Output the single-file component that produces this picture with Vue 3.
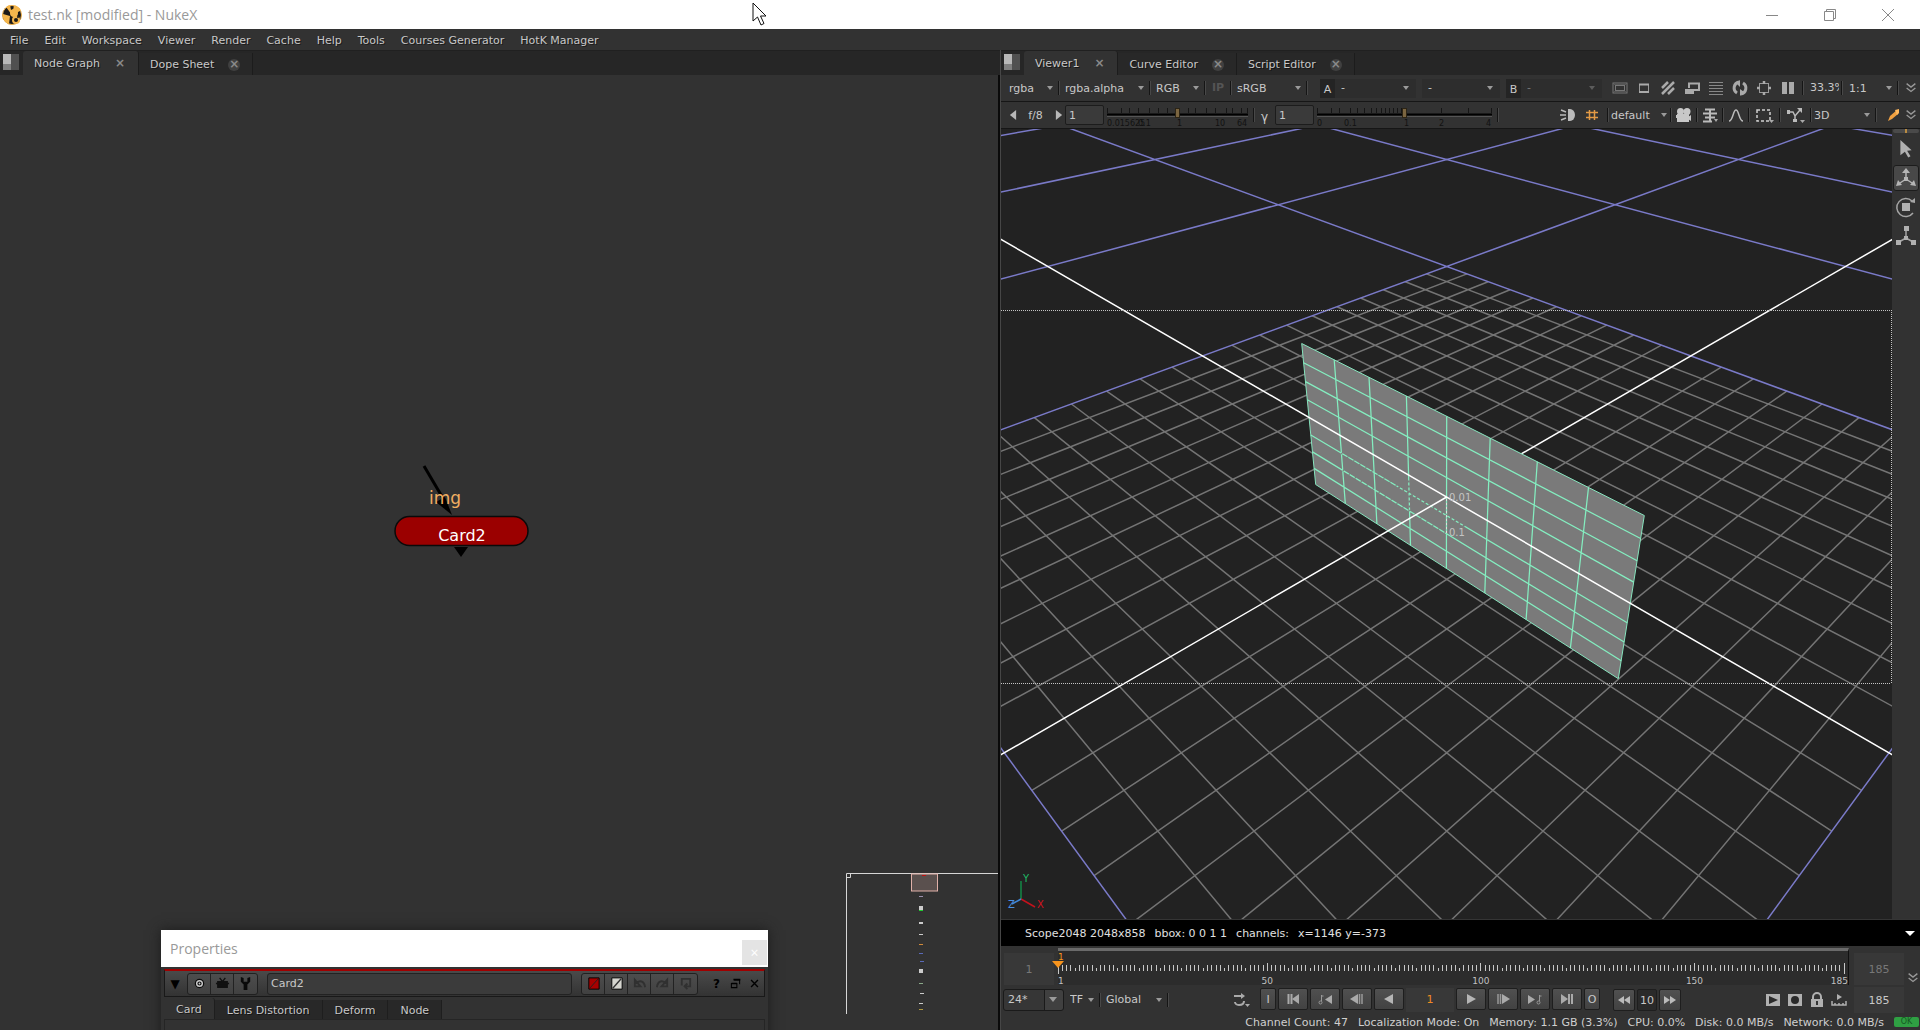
<script setup>
import { ref } from 'vue'

const menus = ['File', 'Edit', 'Workspace', 'Viewer', 'Render', 'Cache', 'Help', 'Tools', 'Courses Generator', 'HotK Manager']
const leftTabs = ['Node Graph', 'Dope Sheet']
const rightTabs = ['Viewer1', 'Curve Editor', 'Script Editor']
const propTabs = ['Card', 'Lens Distortion', 'Deform', 'Node']
const cardName = ref('Card2')
const gain = ref('1')
const gamma = ref('1')
const gainPos = ref(50)
const gammaPos = ref(50)

const icons = {
  roi: '<rect x="1" y="3" width="14" height="10" fill="none" stroke="#777"/><rect x="3.5" y="5.500" width="9" height="5" fill="none" stroke="#777"/><path d="M2 4.500h12M2 11.500h12" stroke="#555"/>',
  small: '<path d="M3.500 4v8.500h9V4" fill="none" stroke="#999"/><path d="M3 4.500h10M3 12h10" stroke="#aaa" stroke-width="2"/>',
  stripes: '<path d="M2 8l6-6M2 14L14 2M8 14l6-6" stroke="#aaa" stroke-width="2.500"/>',
  proxy: '<path d="M5 8V3.500h10V10H10" fill="none" stroke="#aaa" stroke-width="2"/><rect x="1" y="9" width="9" height="5" fill="#aaa"/>',
  lines: '<path d="M1 2.500h14M1 5.500h14M1 8.500h14M1 11.500h14M1 14.500h14" stroke="#888"/>',
  refresh: '<path d="M7 2a6 6 0 0 0-2 11M9 14a6 6 0 0 0 2-11" fill="none" stroke="#aaa" stroke-width="3"/><path d="M8 0v7L4 3zM8 9v7l4-4z" fill="#aaa"/>',
  target: '<rect x="3.500" y="3.500" width="9" height="9" fill="none" stroke="#999"/><path d="M8 1v3M8 12v3M1 8h3M12 8h3" stroke="#aaa" stroke-width="2.500"/>',
  pause: '<path d="M2 2h5v12H2zM9 2h5v12H9z" fill="#aaa"/>',
  light: '<path d="M8 2h2a5 6 0 0 1 0 12H8z" fill="#bbb"/><path d="M1 3l5 2M0 8h6M1 13l5-2" stroke="#bbb" stroke-width="1.500"/>',
  grid: '<path d="M5.500 3v10M10.500 3v10M2 5.500h12M2 10.500h12" stroke="#e39a45" stroke-width="1.500"/>',
  camera: '<circle cx="4.500" cy="4.500" r="3.500" fill="#c8c8c8"/><circle cx="11" cy="4.500" r="3.500" fill="#c8c8c8"/><path d="M1 7h12v8H1zM0 8h2v3H0zM12 10l3-2v6l-3-2z" fill="#c8c8c8"/>',
  layers: '<path d="M3 2.500h10M1 6.500h14M3 10.500h10M1 14.500h9" stroke="#bbb" stroke-width="2"/><path d="M8 2v13" stroke="#bbb" stroke-width="2"/><path d="M12 12h4l-2 3z" fill="#aaa"/>',
  curve: '<path d="M1 14c4 0 4-11 7-11s3 11 7 11" fill="none" stroke="#bbb" stroke-width="1.500"/>',
  marquee: '<rect x="1" y="3" width="13" height="11" fill="none" stroke="#d0d0d0" stroke-width="1.500" stroke-dasharray="3 2"/><path d="M13 13h5l-2.500 3z" fill="#aaa"/>',
  nodes: '<path d="M1 5h5l2 4 5-6M8 9v5" fill="none" stroke="#bbb" stroke-width="1.500"/><path d="M0 3h3v4H0zM10 1h5v5zM6 12h4v3H6z" fill="#bbb"/><path d="M13 13h5l-2.500 3z" fill="#aaa"/>',
  picker: '<path d="M3 14l2-5 7-6 2 1-1 3-6 5z" fill="#f0a040"/><path d="M10 3l4-1 0 4-2 2z" fill="#ffb95e"/>',
  chevrons: '<path d="M3 3l5 4 5-4M3 8l5 4 5-4" fill="none" stroke="#999" stroke-width="1.500"/>',
  first: '<path d="M3.500 3v10M6.500 3v10" stroke="#aaa" stroke-width="2"/><path d="M14 3v10L7 8z" fill="#aaa"/>',
  prevKey: '<path d="M15 4v9L8 8.500z" fill="#aaa"/><path d="M4.500 4v6M4.500 5h2" stroke="#999"/><circle cx="3.500" cy="11.500" r="1.500" fill="none" stroke="#999"/>',
  prevFrame: '<path d="M9 3v10L1 8z" fill="#aaa"/><path d="M10.500 3v10M13 3v10" stroke="#999" stroke-width="1.500"/>',
  back: '<path d="M12 3v10L3 8z" fill="#b5b5b5"/>',
  play: '<path d="M4 3v10l9-5z" fill="#b5b5b5"/>',
  nextFrame: '<path d="M7 3v10l8-5z" fill="#aaa"/><path d="M3 3v10M5.500 3v10" stroke="#999" stroke-width="1.500"/>',
  nextKey: '<path d="M1 4v9l7-4.500z" fill="#aaa"/><path d="M12.500 4v6M12.500 5h2" stroke="#999"/><circle cx="11.500" cy="11.500" r="1.500" fill="none" stroke="#999"/>',
  last: '<path d="M2 3v10l7-5z" fill="#aaa"/><path d="M10 3v10M13 3v10" stroke="#aaa" stroke-width="2"/>',
  rew: '<path d="M8 4v8L2 8zM14 4v8L8 8z" fill="#bbb"/>',
  fwd: '<path d="M2 4v8l6-4zM8 4v8l6-4z" fill="#bbb"/>',
  loop: '<path d="M2 4h9M12 9c0 3-2 4-5 4s-4-2-4-3" fill="none" stroke="#aaa" stroke-width="2"/><path d="M9 1v6l4-3z" fill="#aaa"/><path d="M13 12h5l-2.500 3z" fill="#aaa"/>',
  flip: '<rect x="1" y="2" width="14" height="12" fill="#b0b0b0"/><path d="M4 4l9 4-9 4z" fill="#2a2a2a"/>',
  record: '<rect x="1" y="2" width="14" height="12" fill="#b0b0b0"/><circle cx="8" cy="8" r="4" fill="#2a2a2a"/>',
  lock: '<path d="M4 7V5a4 4 0 0 1 8 0v2" fill="none" stroke="#b0b0b0" stroke-width="2"/><rect x="2" y="7" width="12" height="8" fill="#b0b0b0"/><path d="M8 9v4" stroke="#333" stroke-width="2"/>',
  range: '<path d="M1 9v4h14V9M4 11v2M8 11v2M12 11v2" fill="none" stroke="#b0b0b0" stroke-width="1.500"/><path d="M6 2v6l5-3z" fill="#b0b0b0"/>',
  left: '<path d="M13 0v16L3 8z" fill="#b8b8b8"/>',
  right: '<path d="M3 0v16l10-8z" fill="#b8b8b8"/>',
  cursor: '<path d="M3 0l10 9-4 .5 3 5-2 1-3-5-4 3z" fill="#b0b0b0"/>',
  move: '<path d="M10 9V3M10 11l-6 4M10 11l6 4" stroke="#b5b5b5" stroke-width="1.500"/><path d="M6 5l4-5 4 5zM0 18l2-6 4 5zM20 18l-2-6-4 5zM8 9h4v4H8z" fill="#b5b5b5"/>',
  rotate: '<path d="M16 4a9 9 0 1 0 1 12" fill="none" stroke="#a5a5a5" stroke-width="1.500"/><path d="M14 5l5 1V1z" fill="#a5a5a5"/><path d="M6 6h8v8H6z" fill="#b0b0b0"/>',
  scale: '<path d="M10 3v9l-7 4M10 12l7 4" fill="none" stroke="#a5a5a5" stroke-width="1.500"/><path d="M8 0h5v5H8zM8 10h4v4H8zM0 14h5v5H0zM15 14h5v5h-5z" fill="#b0b0b0"/>',
  centre: '<circle cx="8" cy="8" r="5" fill="#0c0c0c"/><circle cx="8" cy="8" r="3" fill="none" stroke="#ccc" stroke-width="1.500"/><circle cx="8" cy="8" r="1" fill="#ccc"/>',
  mask: '<path d="M1 8h14M3 6h10v6H3z" fill="#111" stroke="#111" stroke-width="1.500"/><path d="M5 2l3 4 3-4" stroke="#111" stroke-width="1.500" fill="none"/>',
  wrench: '<path d="M3 1v5l3 3v6h4V9l3-3V1l-3 1v4H6V2z" fill="#0a0a0a"/>',
  red: '<path d="M3 2h11v12H3z" fill="#a80000" stroke="#000"/><path d="M4 13l9-10" stroke="#222"/>',
  white: '<path d="M3 2h11v12H3z" fill="#d5d5cf" stroke="#000"/><path d="M4 13l9-10" stroke="#333" stroke-width="1.500"/>',
  undo: '<path d="M3 4v7h6zM4 8c4-4 9-3 10 4" fill="none" stroke="#303030" stroke-width="2"/>',
  redo: '<path d="M13 4v7H7zM12 8C8 4 3 5 2 12" fill="none" stroke="#303030" stroke-width="2"/>',
  revert: '<path d="M4 10V3h9v8H8M10 8l-3 3 3 3" fill="none" stroke="#303030" stroke-width="2"/>',
  floatWin: '<path d="M6 3h8v6M2 8h8v6H2z" fill="none" stroke="#000" stroke-width="1.500"/><path d="M5 2.500h10M2 8h8" stroke="#000" stroke-width="2.500"/>',
  close: '<path d="M3 3l10 10M13 3L3 13" stroke="#000" stroke-width="2"/>'
}

// Floor camera: looks along the grid diagonal, no roll.
const D = 17.31
const C = 10899
const F = 1089
const VX = 1001
const VY = 129
function floor(u, v) {
  const s = (u + v) / 2
  const t = (u - v) / 2
  const w = D - s
  return [1446.7 + (F * t) / w - VX, -132.6 + C / w - VY]
}
function seg(a, b) {
  return `M${a[0].toFixed(1)} ${a[1].toFixed(1)}L${b[0].toFixed(1)} ${b[1].toFixed(1)}`
}
let fine = ''
for (let i = -9; i <= 9; i++) {
  if (i === 0) continue
  fine += seg(floor(i, -10), floor(i, 10)) + seg(floor(-10, i), floor(10, i))
}
let coarse = ''
for (let k = -60; k <= 10; k += 10) {
  if (k === 0) continue
  coarse += seg(floor(k, -80), floor(k, 32 - k)) + seg(floor(-80, k), floor(32 - k, k))
}
const axisX = seg(floor(-60, 0), floor(32, 0))
const axisFar = seg(floor(0, -60), floor(0, 0))
const axisNear = seg(floor(0, 0), floor(0, 32))

// Card: unit square mapped onto its projected corners.
const q = [[1301.7, 343.5], [1644.3, 515.5], [1618.3, 678.7], [1315.7, 484.5]].map(p => [p[0] - VX, p[1] - VY])
const sx = q[0][0] - q[1][0] + q[2][0] - q[3][0]
const sy = q[0][1] - q[1][1] + q[2][1] - q[3][1]
const dx1 = q[1][0] - q[2][0]
const dx2 = q[3][0] - q[2][0]
const dy1 = q[1][1] - q[2][1]
const dy2 = q[3][1] - q[2][1]
const det = dx1 * dy2 - dx2 * dy1
const g = (sx * dy2 - dx2 * sy) / det
const h = (dx1 * sy - sx * dy1) / det
function card(a, b) {
  const u = a / 8
  const v = b / 8
  const w = g * u + h * v + 1
  return [
    ((q[1][0] - q[0][0] + g * q[1][0]) * u + (q[3][0] - q[0][0] + h * q[3][0]) * v + q[0][0]) / w,
    ((q[1][1] - q[0][1] + g * q[1][1]) * u + (q[3][1] - q[0][1] + h * q[3][1]) * v + q[0][1]) / w
  ]
}
const outline = q.map(p => p.join(',')).join(' ')
let wire = ''
for (let i = 1; i < 8; i++) {
  wire += seg(card(i, 0), card(i, 8))
  if (i !== 4) wire += seg(card(0, i), card(8, i))
}
const faded = seg(card(2.7, 5), card(4.5, 5)) + seg(card(3, 4.3), card(3, 6))
const speckled = seg(card(1, 6), card(4, 6)) + seg(card(1, 5), card(2.7, 5))

const frames = Array.from({ length: 185 }, (_, i) => i + 1)
const framePos = f => ((f - 1) / 184) * 100 + '%'
function tick(f) {
  if (f === 1 || f === 185) return [10, 21]
  if (f % 50 === 0) return [10, 18]
  if (f % 5 === 0) return [15, 18]
  return [12, 18]
}
const gainTicks = [0, 14, 22, 31, 42, 51, 60, 71, 81, 88, 99, 108, 119, 125, 134, 140]
const gammaTicks = [0, 14, 22, 33, 40, 47, 54, 59, 64, 68, 72, 76, 80, 84, 87, 124, 151, 174]
const marks = [
  [36, 1, '#9a8fae', 919], [46, 4, '#ccc', 919], [50, 1, '#22cc33', 919], [62, 2, '#ccc', 919], [74, 1, '#ccc', 919],
  [84, 1, '#d08a3a', 919], [93, 1, '#5a6ab8', 919], [101, 1, '#5a6ab8', 920], [109, 4, '#ccc', 919], [123, 1, '#8aa888', 919],
  [133, 1, '#ccc', 920], [143, 1, '#ccc', 919], [149, 1, '#b09a40', 919]
]
const viewIcons = ['roi', 'small', 'stripes', 'proxy', 'lines', 'refresh', 'target', 'pause']
const info = ['Scope2048 2048x858', 'bbox: 0 0 1 1', 'channels:', 'x=1146 y=-373']
const status = ['Channel Count: 47', 'Localization Mode: On', 'Memory: 1.1 GB (3.3%)', 'CPU: 0.0%', 'Disk: 0.0 MB/s', 'Network: 0.0 MB/s']
</script>

<template>
  <div class="app">
    <header class="titlebar">
      <svg class="logo" viewBox="0 0 20 20" aria-hidden="true">
        <circle cx="10" cy="10" r="9.500" fill="#1c1a18" stroke="#efb04a" />
        <path d="M10 10L4 2a10 10 0 0 1 4-2zM10 10l2-9.500c3 0 6 2 7 5zM8 11L1 9C0 13 3 18 7 19z" fill="#f5b64c" />
        <circle cx="12" cy="8" r="4" fill="#f5b64c" />
        <circle cx="14" cy="15" r="4" fill="#f5b64c" />
        <circle cx="14" cy="15" r="2" fill="#1c1a18" />
        <circle cx="16" cy="12" r="1" fill="#1c1a18" />
      </svg>
      <span class="title">test.nk [modified] - NukeX</span>
      <div class="winbtns">
        <button aria-label="Minimize"><svg viewBox="0 0 14 14"><path d="M1 7.500h12" /></svg></button>
        <button aria-label="Restore"><svg viewBox="0 0 14 14"><path d="M1.500 3.500h9v9h-9zM3.500 3.500v-2h9v9h-2" /></svg></button>
        <button aria-label="Close"><svg viewBox="0 0 14 14"><path d="M1 1l12 12M13 1L1 13" /></svg></button>
      </div>
    </header>
    <svg class="pointer" viewBox="0 0 15 24" aria-hidden="true"><path d="M1 1v18l4.500-4 3.500 8 3-1.500-3.500-7.500H14z" fill="#fff" stroke="#111" /></svg>

    <nav class="menubar">
      <button v-for="m in menus" :key="m">{{ m }}</button>
    </nav>

    <main class="panes">
      <section class="pane">
        <div class="tabs">
          <i class="panebox"><b></b></i>
          <button v-for="(t, i) in leftTabs" :key="t" class="tab" :class="{ on: i === 0 }">{{ t }}<span class="x">×</span></button>
        </div>
        <div class="graph">
          <svg class="node" viewBox="0 0 140 100" role="img" aria-label="Card2 node">
            <path d="M33 6l20 34" stroke="#000" stroke-width="3" />
            <path d="M45 42l9-5 7 18z" />
            <text x="38" y="44" class="img">img</text>
            <rect x="4" y="56.500" width="133" height="29" rx="14.500" fill="#9b0000" stroke="#0a0a0a" stroke-width="1.500" />
            <text x="71" y="81" class="cardtxt">Card2</text>
            <path d="M63 87h14l-7 10z" />
          </svg>
          <svg class="navmap" viewBox="0 0 152 142" aria-hidden="true">
            <path d="M0.500 141V0.500H152M0.500 4.500H4.500V0.500" fill="none" stroke="#d6d6d6" />
            <rect x="65.500" y="1" width="26" height="17" fill="#5a504e" stroke="#e0b0a8" />
            <rect x="76" y="2" width="4" height="1" fill="#c01010" />
            <rect v-for="(m, i) in marks" :key="i" :x="m[3] - 846" :y="m[0] - 13" width="4" :height="m[1]" :fill="m[2]" />
          </svg>
          <section class="props">
            <div class="ptitle"><span>Properties</span><button aria-label="Close">×</button></div>
            <div class="pbody">
              <div class="phead">
                <button class="plain tri" aria-label="Collapse">▼</button>
                <div class="group">
                  <button v-for="n in ['centre', 'mask', 'wrench']" :key="n" :aria-label="n"><svg viewBox="0 0 16 16" v-html="icons[n]"></svg></button>
                </div>
                <input v-model="cardName" aria-label="Node name" />
                <div class="group">
                  <button v-for="n in ['red', 'white', 'undo', 'redo', 'revert']" :key="n" :aria-label="n"><svg viewBox="0 0 16 16" v-html="icons[n]"></svg></button>
                </div>
                <div class="pend">
                  <button class="plain help">?</button>
                  <button class="plain" aria-label="Float"><svg viewBox="0 0 16 16" v-html="icons.floatWin"></svg></button>
                  <button class="plain" aria-label="Close"><svg viewBox="0 0 16 16" v-html="icons.close"></svg></button>
                </div>
              </div>
              <div class="ptabs">
                <button v-for="(t, i) in propTabs" :key="t" :class="{ on: i === 0 }">{{ t }}</button>
              </div>
              <div class="ppanel"></div>
            </div>
          </section>
        </div>
      </section>

      <section class="pane right">
        <div class="tabs">
          <i class="panebox"><b></b></i>
          <button v-for="(t, i) in rightTabs" :key="t" class="tab" :class="{ on: i === 0 }">{{ t }}<span class="x">×</span></button>
        </div>

        <div class="bar">
          <span class="combo w44"><select aria-label="Channels"><option>rgba</option></select></span><i class="sep"></i>
          <span class="combo w79"><select aria-label="Alpha channel"><option>rgba.alpha</option></select></span><i class="sep"></i>
          <span class="combo w43"><select aria-label="Display"><option>RGB</option></select></span><i class="sep"></i>
          <button class="ip">IP</button><i class="sep"></i>
          <span class="combo w64"><select aria-label="Viewer process"><option>sRGB</option></select></span><i class="sep"></i>
          <label class="ab" for="in-a">A</label>
          <span class="combo well"><select id="in-a"><option>-</option></select></span>
          <span class="combo well mid"><select aria-label="Wipe"><option>-</option></select></span>
          <label class="ab b" for="in-b">B</label>
          <span class="combo well dim"><select id="in-b"><option>-</option></select></span>
          <span class="grow"></span>
          <button v-for="n in viewIcons" :key="n" class="ic" :aria-label="n"><svg viewBox="0 0 16 16" v-html="icons[n]"></svg></button>
          <i class="sep tight"></i>
          <span class="zoom">33.3%</span><i class="sep tight"></i>
          <span class="combo w43"><select aria-label="Downrez"><option>1:1</option></select></span><i class="sep"></i>
          <button class="more" aria-label="More"><svg viewBox="0 0 16 16" v-html="icons.chevrons"></svg></button>
        </div>

        <div class="bar second">
          <button class="step" aria-label="Stop down"><svg viewBox="0 0 16 16" v-html="icons.left"></svg></button>
          <span class="fstop">f/8</span>
          <button class="step" aria-label="Stop up"><svg viewBox="0 0 16 16" v-html="icons.right"></svg></button>
          <input v-model="gain" class="num" aria-label="Gain" />
          <div class="slider gain">
            <svg width="141" height="26" aria-hidden="true">
              <path v-for="x in gainTicks" :key="x" :d="`M${x + 0.5} 6v5`" stroke="#151515" />
              <path d="M0 12.500h141" stroke="#000" stroke-width="2" /><path d="M0 14.500h141" stroke="#555" />
              <text x="0" y="24">0.015625</text><text x="31" y="24">0.1</text><text x="70" y="24">1</text><text x="108" y="24">10</text><text x="130" y="24">64</text>
            </svg>
            <input v-model="gainPos" type="range" aria-label="Gain slider" />
          </div>
          <i class="sep tight"></i><label class="gam" for="gamma">γ</label>
          <input id="gamma" v-model="gamma" class="num" />
          <div class="slider gamma">
            <svg width="175" height="26" aria-hidden="true">
              <path v-for="x in gammaTicks" :key="x" :d="`M${x + 0.5} 6v5`" stroke="#151515" />
              <path d="M0 12.500h175" stroke="#000" stroke-width="2" /><path d="M0 14.500h175" stroke="#555" />
              <text x="0" y="24">0</text><text x="27" y="24">0.1</text><text x="87" y="24">1</text><text x="122" y="24">2</text><text x="169" y="24">4</text>
            </svg>
            <input v-model="gammaPos" type="range" aria-label="Gamma slider" />
          </div>
          <i class="sep tight"></i>
          <span class="grow"></span>
          <button class="ic" aria-label="Headlamp"><svg viewBox="0 0 16 16" v-html="icons.light"></svg></button>
          <button class="ic" aria-label="Grid"><svg viewBox="0 0 16 16" v-html="icons.grid"></svg></button><i class="sep close"></i>
          <span class="combo w56"><select aria-label="Camera"><option>default</option></select></span><i class="sep close"></i>
          <button class="ic n" aria-label="Camera lock"><svg viewBox="0 0 16 16" v-html="icons.camera"></svg></button><i class="sep close"></i>
          <button class="ic n" aria-label="Layers"><svg viewBox="0 0 16 16" v-html="icons.layers"></svg></button><i class="sep close"></i>
          <button class="ic n" aria-label="Curves"><svg viewBox="0 0 16 16" v-html="icons.curve"></svg></button><i class="sep close"></i>
          <button class="ic" aria-label="Marquee"><svg viewBox="0 0 16 16" v-html="icons.marquee"></svg></button><i class="sep close"></i>
          <button class="ic" aria-label="Selection mode"><svg viewBox="0 0 16 16" v-html="icons.nodes"></svg></button><i class="sep close"></i>
          <span class="combo w56"><select aria-label="View"><option>3D</option></select></span><i class="sep"></i>
          <button class="ic n22" aria-label="Colour picker"><svg viewBox="0 0 16 16" v-html="icons.picker"></svg></button>
          <button class="more" aria-label="More"><svg viewBox="0 0 16 16" v-html="icons.chevrons"></svg></button>
        </div>

        <div class="stage">
          <svg class="view" viewBox="0 0 891 790" preserveAspectRatio="xMidYMid slice" role="img" aria-label="3D viewport">
            <g fill="none">
              <path :d="fine" stroke="#747474" stroke-width="1.500" />
              <path :d="coarse" stroke="#7a7ac8" stroke-width="1.500" />
              <path :d="axisFar" stroke="#fff" stroke-width="1.500" />
              <polygon :points="outline" fill="#7a7a7a" stroke="#86e3bd" />
              <path :d="wire" stroke="#84eec0" stroke-width="1.250" />
              <path :d="faded" stroke="#7a7a7a" stroke-width="2" stroke-dasharray="2 3" />
              <path :d="speckled" stroke="#7a7a7a" stroke-width="2" stroke-dasharray="1 6" />
              <path :d="axisX + axisNear" stroke="#fff" stroke-width="1.500" />
              <path d="M445.500 370v34" stroke="#ddd" stroke-dasharray="2 2" />
              <path d="M0 181.500h890M0 554.500h890M890.500 181v374" stroke="#c4c4c4" stroke-dasharray="1 1" />
              <path d="M20 770v-18" stroke="#138a47" stroke-width="1.500" />
              <path d="M20 770l14 8" stroke="#c3121c" stroke-width="1.500" />
              <path d="M20 770l-9 5" stroke="#3f86d8" stroke-width="1.500" />
            </g>
            <g class="vt">
              <text x="448" y="372" fill="#c4c4c4">0.01</text>
              <text x="448" y="407" fill="#c4c4c4">0.1</text>
              <text x="22" y="753" fill="#1fb865">Y</text>
              <text x="36" y="779" fill="#d3131f">X</text>
              <text x="7" y="779" fill="#4a90e2">Z</text>
            </g>
          </svg>
          <div class="tools">
            <i class="grip"></i>
            <button aria-label="Select"><svg class="sm" viewBox="0 0 16 16" v-html="icons.cursor"></svg></button>
            <button class="on" aria-label="Move"><svg viewBox="0 0 20 20" v-html="icons.move"></svg></button>
            <button aria-label="Rotate"><svg viewBox="0 0 20 20" v-html="icons.rotate"></svg></button>
            <button aria-label="Scale"><svg viewBox="0 0 20 20" v-html="icons.scale"></svg></button>
          </div>
        </div>

        <div class="info"><span v-for="s in info" :key="s">{{ s }}</span><i></i></div>

        <div class="timeline">
          <div class="fbox">1</div>
          <div class="ruler">
            <svg aria-hidden="true">
              <line v-for="f in frames" :key="f" :x1="framePos(f)" :x2="framePos(f)" :y1="tick(f)[0] + 7" :y2="tick(f)[1] + 7" />
              <text x="0" y="38">1</text>
              <text :x="framePos(50)" y="38" text-anchor="middle">50</text>
              <text :x="framePos(100)" y="38" text-anchor="middle">100</text>
              <text :x="framePos(150)" y="38" text-anchor="middle">150</text>
              <text x="100%" y="38" dx="4" text-anchor="end">185</text>
              <text x="0" y="14" class="cur">1</text>
              <path d="M-6 15h12l-6 7z" />
            </svg>
          </div>
          <div class="fbox end">185</div>
          <button class="more" aria-label="More"><svg viewBox="0 0 16 16" v-html="icons.chevrons"></svg></button>
        </div>

        <div class="transport">
          <span class="combo fps"><select aria-label="FPS"><option>24*</option></select></span>
          <span class="combo w24"><select aria-label="Time format"><option>TF</option></select></span><i class="sep"></i>
          <span class="combo w56"><select aria-label="Range"><option>Global</option></select></span><i class="sep"></i>
          <span class="grow lead"></span>
          <button class="ic loop" aria-label="Loop"><svg viewBox="0 0 16 16" v-html="icons.loop"></svg></button>
          <div class="btns">
            <button class="s">I</button>
            <button v-for="n in ['first', 'prevKey', 'prevFrame', 'back']" :key="n" :aria-label="n"><svg viewBox="0 0 16 16" v-html="icons[n]"></svg></button>
            <output>1</output>
            <button v-for="n in ['play', 'nextFrame', 'nextKey', 'last']" :key="n" :aria-label="n"><svg viewBox="0 0 16 16" v-html="icons[n]"></svg></button>
            <button class="s">O</button>
          </div>
          <div class="btns skip">
            <button class="m" aria-label="Skip back"><svg viewBox="0 0 16 16" v-html="icons.rew"></svg></button>
            <span>10</span>
            <button class="m" aria-label="Skip forward"><svg viewBox="0 0 16 16" v-html="icons.fwd"></svg></button>
          </div>
          <span class="grow trail"></span>
          <button v-for="n in ['flip', 'record', 'lock', 'range']" :key="n" class="ic n22" :aria-label="n"><svg viewBox="0 0 16 16" v-html="icons[n]"></svg></button>
          <div class="fbox last">185</div>
        </div>

        <footer class="status"><span v-for="s in status" :key="s">{{ s }}</span><b>OK</b></footer>
      </section>
    </main>
  </div>
</template>

<style>
html, body { margin: 0; background: #323232; }
</style>

<style scoped>
.app { position: relative; display: flex; flex-direction: column; height: 100vh; overflow: hidden; background: #323232; color: #c8c8c8; font: 11px/14px "DejaVu Sans", Verdana, sans-serif; }
button, input, select { font: inherit; color: inherit; background: none; border: 0; padding: 0; margin: 0; border-radius: 0; }
button { display: flex; align-items: center; justify-content: center; }
svg { display: block; overflow: visible; }
i { display: block; }
.grow { flex: 1; }
.grow.lead { flex: 2; }
.grow.trail { flex: 3; }

.titlebar { display: flex; align-items: center; height: 29px; background: #fff; color: #999; }
.logo { width: 20px; height: 20px; margin: 0 6px 0 2px; }
.title { font: 14px/20px "Open Sans", "Segoe UI", sans-serif; flex: 1; }
.winbtns { display: flex; padding-right: 3px; }
.winbtns button { width: 58px; height: 28px; }
.winbtns svg { width: 14px; height: 14px; fill: none; stroke: #888; }
.pointer { position: absolute; left: 752px; top: 2px; width: 15px; height: 24px; z-index: 5; }

.menubar { display: flex; align-items: center; gap: 2px; height: 21px; padding: 2px 0 0 3px; box-sizing: border-box; }
.menubar button { padding: 0 7px; text-shadow: 1px 1px 0 #1c1c1c; }

.panes { flex: 1; display: grid; grid-template-columns: 1000fr 920fr; min-height: 0; }
.pane { display: flex; flex-direction: column; min-width: 0; min-height: 0; }
.pane.right { border-left: 1px solid #464646; }
.tabs { display: flex; align-items: flex-end; height: 25px; background: #262626; padding-left: 3px; border-top: 1px solid #202020; box-sizing: border-box; flex: none; }
.panebox { width: 16px; height: 16px; background: #505050; margin: 0 4px 5px 0; }
.panebox b { display: block; width: 8px; height: 16px; background: linear-gradient(#b8b8b8 60%, #808080 60%); }
.tab { height: 22px; padding: 2px 12px 0 11px; gap: 14px; border: 1px solid #1c1c1c; border-width: 0 1px 0 0; background: #282828; text-shadow: 1px 1px 0 #151515; }
.tab .x { width: 12px; height: 12px; border-radius: 6px; background: #404040; color: #8a8a8a; font-size: 12px; font-weight: bold; line-height: 11px; text-shadow: none; }
.tab.on { background: #323232; height: 24px; border-radius: 3px 3px 0 0; }
.tab.on .x { background: none; }

.graph { position: relative; flex: 1; border-right: 2px solid #0a0a0a; overflow: hidden; }
.node { position: absolute; left: 391px; top: 385px; width: 140px; height: 100px; }
.node text { font-size: 16px; }
.node .img { fill: #f0ae62; font-size: 17px; }
.node .cardtxt { fill: #fff; text-anchor: middle; }
.navmap { position: absolute; left: 846px; top: 798px; width: 152px; height: 142px; }

.props { position: absolute; left: 161px; top: 855px; width: 607px; box-shadow: 0 0 12px #1c1c1c; background: #323232; }
.ptitle { display: flex; align-items: center; height: 37px; background: #fff; color: #999; font: 14px/20px "Open Sans", "Segoe UI", sans-serif; padding: 0 1px 0 9px; }
.ptitle span { flex: 1; }
.ptitle button { width: 25px; height: 25px; background: #e4e4e4; color: #fff; margin-top: 8px; }
.pbody { padding: 2px 3px 0; }
.phead { display: flex; align-items: center; height: 25px; border: 1px solid #191919; border-top: 2px solid #a00000; background: linear-gradient(#4a4a4a, #333); }
.group { display: flex; border: 1px solid #202020; border-radius: 3px; background: linear-gradient(#4d4d4d, #414141); }
.group button { width: 23px; height: 20px; border-right: 1px solid #222; box-sizing: border-box; }
.group button:last-child { border: 0; }
.group svg { width: 15px; height: 15px; }
.plain { width: 19px; height: 20px; color: #000; }
.plain svg { width: 11px; height: 11px; }
.plain.tri { width: 20px; margin-right: 2px; font-size: 12px; }
.plain.help { font-size: 12px; font-weight: bold; }
.phead input { flex: 1; min-width: 0; height: 22px; margin: 0 9px; padding: 0 3px; box-sizing: border-box; background: #3b3b3b; border: 1px solid #222; border-radius: 3px; }
.pend { display: flex; margin: 0 0 0 9px; }
.ptabs { display: flex; align-items: flex-end; height: 22px; }
.ptabs button { height: 19px; padding: 2px 12px 0; background: #282828; border-right: 1px solid #1e1e1e; text-shadow: 1px 1px 0 #151515; }
.ptabs .on { height: 21px; background: #323232; border-radius: 3px 3px 0 0; }
.ppanel { height: 40px; border: 1px solid #252525; }

.bar { display: flex; align-items: center; height: 26px; padding: 0 2px 0 8px; border-bottom: 1px solid #161616; flex: none; }
.combo { position: relative; display: block; flex: none; height: 18px; text-shadow: 1px 1px 0 #191919; }
.combo select { appearance: none; display: block; width: 100%; height: 18px; outline: 0; overflow: hidden; padding-top: 1px; }
.combo::after { content: ""; position: absolute; right: 0; top: 7px; border: 3px solid transparent; border-top: 4px solid #9a9a9a; border-bottom: 0; pointer-events: none; }
.w24 { width: 24px; }
.w43 { width: 43px; }
.w44 { width: 44px; }
.w56 { width: 56px; }
.w64 { width: 64px; }
.w79 { width: 79px; }
.sep { flex: none; width: 1px; height: 14px; margin: 0 6px 0 5px; background: #151515; box-shadow: 1px 0 #484848; }
.sep.tight { margin: 0 7px 0 2px; }
.sep.close { margin: 0 3px; }
.ip { width: 14px; color: #555; font-weight: bold; }
.ab { width: 15px; height: 19px; line-height: 21px; margin-left: 7px; text-align: center; background: #242424; flex: none; }
.ab.b { margin-left: 6px; }
.well { width: 81px; box-sizing: border-box; height: 19px; background: #2d2d2d; padding-left: 6px; }
.well::after { right: 7px; }
.well.mid { margin-left: 6px; width: 78px; }
.dim { color: #777; }
.dim::after { border-top-color: #5c5c5c; }
.ic { flex: none; width: 24px; height: 22px; }
.ic svg { width: 16px; height: 16px; }
.ic.n { width: 19px; }
.ic.n22 { width: 22px; }
.zoom { width: 29px; overflow: hidden; white-space: nowrap; }
.more { width: 14px; flex: none; }
.more svg { width: 14px; height: 14px; }
.step { width: 7px; flex: none; }
.step svg { width: 10px; height: 10px; flex: none; }
.fstop { width: 39px; text-align: center; padding-top: 2px; }
.num { width: 39px; height: 20px; box-sizing: border-box; margin: 0 3px; padding: 1px 3px 0; background: #3a3a3a; border: 1px solid #1c1c1c; border-radius: 2px; flex: none; }
.slider { position: relative; height: 26px; flex: none; overflow: hidden; margin-right: 3px; }
.slider.gain { width: 141px; }
.slider.gamma { width: 175px; }
.slider text { font-size: 8px; fill: #111; }
.slider input { appearance: none; position: absolute; inset: 6px 0 auto 0; width: 100%; height: 10px; }
.slider input::-webkit-slider-thumb { appearance: none; width: 5px; height: 10px; background: #7b6540; border: 1px solid #2c2415; box-sizing: border-box; }
.gam { width: 11px; font-size: 12px; flex: none; padding-top: 4px; }

.stage { flex: 1; display: flex; min-height: 0; border-bottom: 1px solid #353535; }
.view { flex: 1; min-width: 0; height: 100%; background: #222; overflow: hidden; }
.vt text { font-size: 10px; }
.tools { width: 28px; flex: none; display: flex; flex-direction: column; align-items: center; gap: 3px; }
.tools button { width: 26px; height: 26px; box-sizing: border-box; }
.tools svg { width: 20px; height: 20px; }
.tools .sm { width: 18px; height: 18px; }
.tools .on { background: #484848; border: 1px solid #1c1c1c; border-radius: 3px; }
.grip { width: 26px; height: 4px; border-radius: 2px; background: linear-gradient(90deg, #4a4a4a 48%, #b98b42 48% 53%, #4a4a4a 53%); }

.info { display: flex; align-items: center; gap: 9px; height: 26px; box-sizing: border-box; background: #000; color: #e0e0e0; padding: 1px 5px 0 24px; flex: none; }
.info i { margin-left: auto; border: 5px solid transparent; border-top: 5px solid #fff; border-bottom: 0; }

.timeline { display: flex; height: 39px; flex: none; }
.fbox { width: 50px; height: 32px; box-sizing: border-box; padding-top: 2px; margin: 7px 4px 0 3px; background: #383838; color: #777; display: flex; align-items: center; justify-content: center; }
.fbox.end { margin: 7px 1px 0 5px; }
.ruler { flex: 1; background: #2c2c2c; border-top: 3px solid #6a6a6a; margin-top: 2px; height: 34px; padding-right: 4px; border-right: 1px solid #111; }
.ruler svg { width: 100%; height: 34px; margin-top: -5px; }
.ruler line { stroke: #c8c8c8; shape-rendering: crispEdges; }
.ruler text { font-size: 9px; fill: #c0c0c0; }
.ruler .cur { fill: #f7941d; }
.ruler path { fill: #f7941d; }
.timeline .more { width: 15px; align-items: flex-end; padding-top: 4px; }

.transport { display: flex; align-items: center; height: 29px; flex: none; padding-left: 2px; }
.fps { width: 61px; height: 22px; box-sizing: border-box; border: 1px solid #1a1a1a; border-radius: 3px; background: linear-gradient(90deg, #363636 40px, #1a1a1a 40px 41px, #404040 41px); padding-left: 4px; margin-right: 6px; }
.fps select { height: 20px; }
.fps::after { right: 6px; border-width: 5px 4px 0; }
.loop { margin-right: 8px; }
.btns { display: flex; gap: 2px; }
.btns button, .btns span { width: 30px; height: 22px; box-sizing: border-box; background: linear-gradient(#505050, #424242); border: 1px solid #1e1e1e; border-radius: 2px; }
.btns .s { width: 16px; padding-top: 2px; }
.btns .m { width: 22px; }
.btns svg { width: 16px; height: 16px; }
.btns span { width: 20px; background: #2a2a2a; text-align: center; line-height: 22px; }
.btns output { width: 48px; line-height: 24px; text-align: center; color: #f08a24; background: #383838; }
.skip { margin-left: 13px; }
.fbox.last { height: 26px; color: #c8c8c8; margin: 0 16px 0 4px; }

.status { display: flex; align-items: center; justify-content: flex-end; gap: 10px; height: 16px; flex: none; white-space: pre; padding-right: 1px; color: #cfcfcf; }
.status span { padding-top: 2px; }
.status b { width: 25px; height: 10px; border-radius: 2px; background: #2fa043; color: #165a22; font: 8px/10px "DejaVu Sans", sans-serif; text-align: center; }
</style>
